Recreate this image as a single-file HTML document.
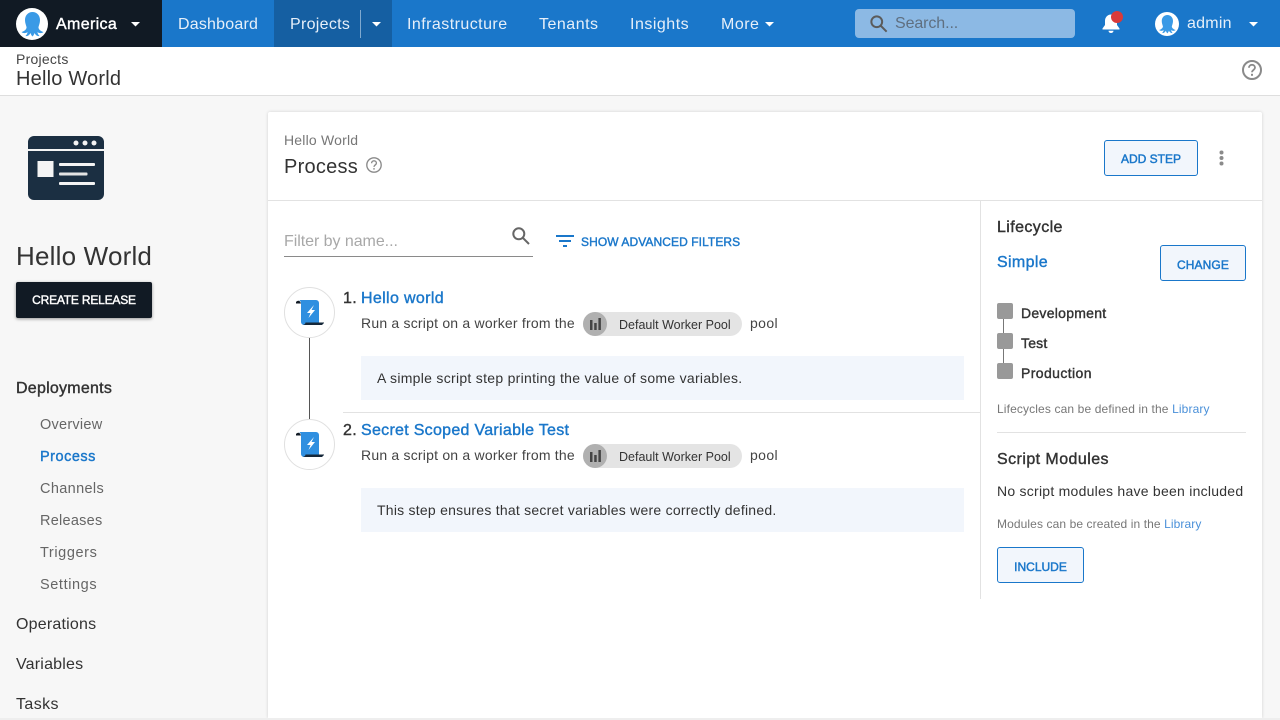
<!DOCTYPE html>
<html><head><meta charset="utf-8"><style>
html,body{margin:0;padding:0;width:1280px;height:720px;overflow:hidden;background:#f7f7f7;font-family:"Liberation Sans",sans-serif;color:#333}
.a{position:absolute}
.t{position:absolute;white-space:nowrap;line-height:20px}
.m{-webkit-text-stroke:.4px currentColor}
svg{position:absolute;overflow:visible}
.btn{position:absolute;box-sizing:border-box;border:1px solid #1a77ca;border-radius:3px;background:#f2f6fc;color:#1a77ca;font-size:12px;text-align:center;white-space:nowrap;-webkit-text-stroke:.45px currentColor}
.nav{font-size:16px;color:#e6eff9;top:15px}
.side{font-size:14.5px;color:#666;left:40px}
.sideh{font-size:16px;color:#333;left:16px}
.pill{position:absolute;left:583px;width:159px;height:24px;border-radius:12px;background:#e4e4e4}
.pill i{position:absolute;left:0;top:0;width:24px;height:24px;border-radius:12px;background:#b0b0b0}
.pill b{position:absolute;left:36px;top:3px;font-weight:400;font-size:12.5px;line-height:20px;color:#333;white-space:nowrap}
.box{position:absolute;left:361px;width:603px;height:44px;background:#f2f6fc}
.sq{position:absolute;left:997px;width:16px;height:16px;border-radius:2px;background:#999}
</style></head><body>

<div class="a" style="left:0;top:0;width:1280px;height:47px;background:#1a77ca"></div>
<div class="a" style="left:0;top:0;width:162px;height:47px;background:#111a24"></div>
<div class="a" style="left:274px;top:0;width:118px;height:47px;background:#155fa2"></div>
<div class="a" style="left:360px;top:10px;width:1px;height:28px;background:#7fa9cf"></div>

<svg style="left:16px;top:8px" width="32" height="32" viewBox="0 0 32 32"><circle cx="16" cy="16" r="16" fill="#fff"/><path d="M16.500 4C12 4 9 7.500 9 12C9 15 10 17 10.500 19C11 21 8 23.500 5.500 24C7 25.500 10 25.500 11.500 24C11.500 25.500 10.500 27 9.500 28C11.500 28.500 13.500 27 14.500 25C15 26.500 15.500 27.500 16.500 28.500C17.500 27.500 18 26.500 18.500 25C19.500 27 21.500 28.500 23.500 28C22.500 27 21.500 25.500 21.500 24C23 25.500 26 25.500 27.500 24C25 23.500 22 21 22.500 19C23 17 24 15 24 12C24 7.500 21 4 16.500 4Z" fill="#3a9ae6"/></svg>
<div class="t m" style="left:56px;top:15px;font-size:16px;color:#fff;letter-spacing:.35px">America</div>
<svg style="left:131px;top:22px" width="9" height="5"><path d="M0 0h9L4.500 4.500z" fill="#fff"/></svg>

<div class="t nav" style="left:178px;letter-spacing:.2px">Dashboard</div>
<div class="t nav" style="left:290px;letter-spacing:.3px">Projects</div>
<svg style="left:372px;top:22px" width="9" height="5"><path d="M0 0h9L4.500 4.500z" fill="#fff"/></svg>
<div class="t nav" style="left:407px;letter-spacing:.45px">Infrastructure</div>
<div class="t nav" style="left:539px;letter-spacing:.5px">Tenants</div>
<div class="t nav" style="left:630px;letter-spacing:.5px">Insights</div>
<div class="t nav" style="left:721px;letter-spacing:.5px">More</div>
<svg style="left:765px;top:22px" width="9" height="5"><path d="M0 0h9L4.500 4.500z" fill="#fff"/></svg>

<div class="a" style="left:855px;top:9px;width:220px;height:29px;border-radius:4px;background:#8cb9e4"></div>
<svg style="left:870px;top:15px" width="18" height="18" viewBox="0 0 20 20" fill="none" stroke="#5b5b5b" stroke-width="2.200"><circle cx="7.500" cy="7.500" r="6"/><path d="M11.800 11.800L18.500 18.500"/></svg>
<div class="t" style="left:895px;top:14px;font-size:16px;color:#5f6f80;letter-spacing:-.1px">Search...</div>

<svg style="left:1102px;top:13px" width="18" height="21" viewBox="0 0 18 21"><path d="M9 1.500c-3.500 0-6 2.800-6 6.500v4L.5 15.500v1h17v-1L15 12V8c0-3.700-2.500-6.500-6-6.500z" fill="#fff"/><path d="M6.500 17.800h5a2.500 2.200 0 0 1-5 0z" fill="#fff"/></svg>
<div class="a" style="left:1111px;top:11px;width:12px;height:12px;border-radius:6px;background:#d93a3a"></div>

<svg style="left:1155px;top:12px" width="24" height="24" viewBox="0 0 32 32"><circle cx="16" cy="16" r="16" fill="#fff"/><path d="M16.500 4C12 4 9 7.500 9 12C9 15 10 17 10.500 19C11 21 8 23.500 5.500 24C7 25.500 10 25.500 11.500 24C11.500 25.500 10.500 27 9.500 28C11.500 28.500 13.500 27 14.500 25C15 26.500 15.500 27.500 16.500 28.500C17.500 27.500 18 26.500 18.500 25C19.500 27 21.500 28.500 23.500 28C22.500 27 21.500 25.500 21.500 24C23 25.500 26 25.500 27.500 24C25 23.500 22 21 22.500 19C23 17 24 15 24 12C24 7.500 21 4 16.500 4Z" fill="#3a9ae6"/></svg>
<div class="t" style="left:1187px;top:14px;font-size:16px;color:#e6eff9;letter-spacing:.25px">admin</div>
<svg style="left:1249px;top:22px" width="9" height="5"><path d="M0 0h9L4.500 4.500z" fill="#fff"/></svg>

<!-- breadcrumb bar -->
<div class="a" style="left:0;top:47px;width:1280px;height:48px;background:#fff;border-bottom:1px solid #dedede"></div>
<div class="t" style="left:16px;top:49px;font-size:14px;color:#444;letter-spacing:.25px">Projects</div>
<div class="t" style="left:16px;top:69px;font-size:20px;color:#333;line-height:20px;letter-spacing:.2px">Hello World</div>
<svg style="left:1242px;top:60px" width="20" height="20" viewBox="0 0 20 20" fill="none" stroke="#8a8a8a" stroke-width="2"><circle cx="10" cy="10" r="9"/><path d="M7 7.800c0-1.800 1.300-3 3-3s3 1.200 3 2.800c0 2.200-3 2.400-3 4.700" stroke-width="1.800"/><path d="M10 13.800v2" stroke-width="2"/></svg>

<!-- left project logo -->
<svg style="left:28px;top:136px" width="76" height="64" viewBox="0 0 76 64"><rect width="76" height="64" rx="6" fill="#1b2f42"/><rect y="13" width="76" height="2" fill="#f4f4f4"/><circle cx="48" cy="7" r="2.500" fill="#f4f4f4"/><circle cx="57" cy="7" r="2.500" fill="#f4f4f4"/><circle cx="66" cy="7" r="2.500" fill="#f4f4f4"/><rect x="9.500" y="25" width="16" height="16" fill="#f4f4f4"/><rect x="31" y="27" width="36" height="3" rx="1" fill="#f4f4f4"/><rect x="31" y="36.500" width="28.500" height="3" rx="1" fill="#e4e4e4"/><rect x="31" y="46" width="36" height="3" rx="1" fill="#f4f4f4"/></svg>

<div class="t" style="left:16px;top:242px;font-size:26px;line-height:28px;color:#333;letter-spacing:.2px">Hello World</div>
<div class="a m" style="left:16px;top:282px;width:136px;height:36px;background:#111a24;border-radius:2px;box-shadow:0 1px 3px rgba(0,0,0,.4);color:#fff;font-size:12px;line-height:36px;text-align:center;letter-spacing:-.2px">CREATE RELEASE</div>

<div class="t sideh m" style="top:379px;letter-spacing:.25px">Deployments</div>
<div class="t side" style="top:415px;letter-spacing:.25px">Overview</div>
<div class="t side m" style="top:447px;color:#1a77ca;letter-spacing:.5px">Process</div>
<div class="t side" style="top:479px;letter-spacing:.35px">Channels</div>
<div class="t side" style="top:511px;letter-spacing:.25px">Releases</div>
<div class="t side" style="top:543px;letter-spacing:.6px">Triggers</div>
<div class="t side" style="top:575px;letter-spacing:.6px">Settings</div>
<div class="t sideh" style="top:615px;letter-spacing:.2px">Operations</div>
<div class="t sideh" style="top:655px;letter-spacing:.2px">Variables</div>
<div class="t sideh" style="top:695px;letter-spacing:.4px">Tasks</div>

<!-- main card -->
<div class="a" style="left:268px;top:112px;width:994px;height:606px;background:#fff;box-shadow:0 0 3px rgba(0,0,0,.16);border-radius:2px 2px 0 0"></div>
<div class="a" style="left:0;top:718px;width:1280px;height:2px;background:#eee"></div>
<div class="a" style="left:268px;top:200px;width:994px;height:1px;background:#e2e2e2"></div>
<div class="a" style="left:980px;top:201px;width:1px;height:398px;background:#e2e2e2"></div>

<div class="t" style="left:284px;top:130px;font-size:14px;color:#777;letter-spacing:.2px">Hello World</div>
<div class="t" style="left:284px;top:157px;font-size:20px;color:#333;letter-spacing:.25px">Process</div>
<svg style="left:366px;top:157px" width="16" height="16" viewBox="0 0 20 20" fill="none" stroke="#8a8a8a" stroke-width="1.700"><circle cx="10" cy="10" r="9"/><path d="M7 7.800c0-1.800 1.300-3 3-3s3 1.200 3 2.800c0 2.200-3 2.400-3 4.700"/><path d="M10 13.800v2"/></svg>

<div class="btn" style="left:1104px;top:140px;width:94px;height:36px;line-height:36px">ADD STEP</div>
<svg style="left:1219px;top:150px" width="5" height="16"><circle cx="2.500" cy="2.500" r="2" fill="#8a8a8a"/><circle cx="2.500" cy="8" r="2" fill="#8a8a8a"/><circle cx="2.500" cy="13.500" r="2" fill="#8a8a8a"/></svg>

<!-- filter -->
<div class="t" style="left:284px;top:232px;font-size:16px;color:#a8a8a8;letter-spacing:-.05px">Filter by name...</div>
<div class="a" style="left:284px;top:256px;width:249px;height:1px;background:#8a8a8a"></div>
<svg style="left:512px;top:226.500px" width="18" height="18" viewBox="0 0 18 18" fill="none" stroke="#666" stroke-width="2"><circle cx="6.800" cy="6.800" r="5.500"/><path d="M10.800 10.800L17 17"/></svg>
<svg style="left:556px;top:235px" width="18" height="12"><path d="M0 0h18v2H0zM3 5h12v2H3zM7 10h4v2H7z" fill="#1a77ca"/></svg>
<div class="t m" style="left:581px;top:232px;font-size:12px;color:#1a77ca;line-height:20px;letter-spacing:.08px">SHOW ADVANCED FILTERS</div>

<!-- steps -->
<div class="a" style="left:309px;top:338px;width:1px;height:82px;background:#555"></div>
<div class="a" style="left:343px;top:412px;width:637px;height:1px;background:#e2e2e2"></div>

<div class="a" style="left:284px;top:287px;width:49px;height:49px;border:1px solid #e0e0e0;border-radius:50%;background:#fff"></div>
<svg style="left:296px;top:300px" width="30" height="26" viewBox="0 0 30 26"><path d="M3 0H20a3 3 0 0 1 3 3V22.500H10l-2 2.500a3 3 0 0 1-3-3V4C5 2 4.500.5 3 0z" fill="#2f8fe0"/><path d="M0 2C1 .5 3 .3 4 1.500L5 3.500H0z" fill="#111a24"/><path d="M9.500 22.500H28v.5l-2 2H7c1.500-.5 2.500-1.500 2.500-2.500z" fill="#16283a"/><path d="M18 5L11 13h3.500L12.500 18l6.500-8h-3.500z" fill="#fff"/></svg>

<div class="t m" style="left:343px;top:289px;font-size:16px;color:#333;letter-spacing:.3px">1.</div>
<div class="t m" style="left:361px;top:289px;font-size:16px;color:#1a77ca;letter-spacing:.35px">Hello world</div>
<div class="t" style="left:361px;top:313px;font-size:14px;color:#444;letter-spacing:.21px">Run a script on a worker from the</div>
<div class="pill" style="top:312px"><i></i><svg style="left:7px;top:6px" width="11" height="12"><path d="M0 2h2.500v10H0zM4.200 5h2.500v7H4.200zM8.400 0h2.500v12H8.400z" fill="#444"/></svg><b>Default Worker Pool</b></div>
<div class="t" style="left:750px;top:313px;font-size:14px;color:#444;letter-spacing:.4px">pool</div>
<div class="box" style="top:356px"></div>
<div class="t" style="left:377px;top:368px;font-size:14px;color:#333;letter-spacing:.29px">A simple script step printing the value of some variables.</div>

<div class="a" style="left:284px;top:419px;width:49px;height:49px;border:1px solid #e0e0e0;border-radius:50%;background:#fff"></div>
<svg style="left:296px;top:432px" width="30" height="26" viewBox="0 0 30 26"><path d="M3 0H20a3 3 0 0 1 3 3V22.500H10l-2 2.500a3 3 0 0 1-3-3V4C5 2 4.500.5 3 0z" fill="#2f8fe0"/><path d="M0 2C1 .5 3 .3 4 1.500L5 3.500H0z" fill="#111a24"/><path d="M9.500 22.500H28v.5l-2 2H7c1.500-.5 2.500-1.500 2.500-2.500z" fill="#16283a"/><path d="M18 5L11 13h3.500L12.500 18l6.500-8h-3.500z" fill="#fff"/></svg>

<div class="t m" style="left:343px;top:421px;font-size:16px;color:#333;letter-spacing:.3px">2.</div>
<div class="t m" style="left:361px;top:421px;font-size:16px;color:#1a77ca;letter-spacing:.29px">Secret Scoped Variable Test</div>
<div class="t" style="left:361px;top:445px;font-size:14px;color:#444;letter-spacing:.21px">Run a script on a worker from the</div>
<div class="pill" style="top:444px"><i></i><svg style="left:7px;top:6px" width="11" height="12"><path d="M0 2h2.500v10H0zM4.200 5h2.500v7H4.200zM8.400 0h2.500v12H8.400z" fill="#444"/></svg><b>Default Worker Pool</b></div>
<div class="t" style="left:750px;top:445px;font-size:14px;color:#444;letter-spacing:.4px">pool</div>
<div class="box" style="top:488px"></div>
<div class="t" style="left:377px;top:500px;font-size:14px;color:#333;letter-spacing:.24px">This step ensures that secret variables were correctly defined.</div>

<!-- right column -->
<div class="t m" style="left:997px;top:218px;font-size:16px;color:#333;letter-spacing:.4px">Lifecycle</div>
<div class="t m" style="left:997px;top:253px;font-size:16px;color:#1a77ca;letter-spacing:.35px">Simple</div>
<div class="btn" style="left:1160px;top:245px;width:86px;height:36px;line-height:38px;letter-spacing:.1px">CHANGE</div>

<div class="a" style="left:1003px;top:315px;width:1px;height:60px;background:#777"></div>
<div class="sq" style="top:303px"></div>
<div class="sq" style="top:333px"></div>
<div class="sq" style="top:363px"></div>
<div class="t m" style="left:1021px;top:303px;font-size:14px;color:#333;letter-spacing:.27px">Development</div>
<div class="t m" style="left:1021px;top:333px;font-size:14px;color:#333;letter-spacing:.2px">Test</div>
<div class="t m" style="left:1021px;top:363px;font-size:14px;color:#333;letter-spacing:.4px">Production</div>

<div class="t" style="left:997px;top:399px;font-size:12px;color:#777;letter-spacing:.13px">Lifecycles can be defined in the <span style="color:#4a90d9">Library</span></div>
<div class="a" style="left:997px;top:432px;width:249px;height:1px;background:#e2e2e2"></div>
<div class="t m" style="left:997px;top:450px;font-size:16px;color:#333;letter-spacing:.44px">Script Modules</div>
<div class="t" style="left:997px;top:481px;font-size:14px;color:#333;letter-spacing:.25px">No script modules have been included</div>
<div class="t" style="left:997px;top:514px;font-size:12px;color:#777;letter-spacing:.1px">Modules can be created in the <span style="color:#4a90d9">Library</span></div>
<div class="btn" style="left:997px;top:547px;width:87px;height:36px;line-height:38px">INCLUDE</div>

</body></html>
